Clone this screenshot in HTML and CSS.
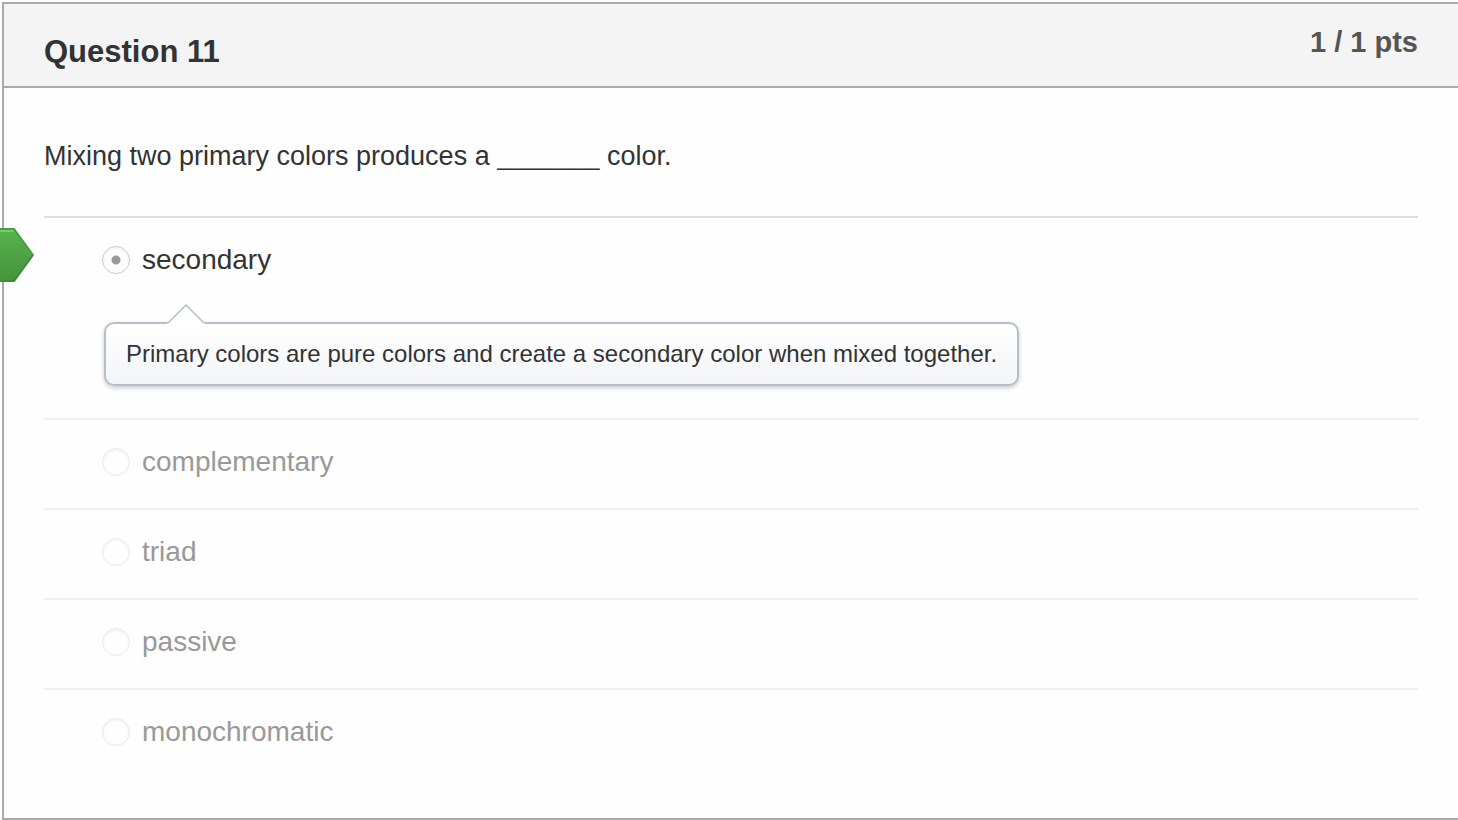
FILE: index.html
```html
<!DOCTYPE html>
<html lang="en">
<head>
<meta charset="utf-8">
<title>Question 11</title>
<link rel="stylesheet" href="styles.css">
</head>
<body>
<main class="question">
  <header class="question-header">
    <h1 class="question-name">Question 11</h1>
    <span class="question-points">1 / 1 pts</span>
  </header>
  <div class="question-body">
    <p class="question-text" id="question-text">Mixing two primary colors produces a <span class="blank">________</span> color.</p>
    <div class="answers" role="radiogroup" aria-labelledby="question-text">
      <div class="answer answer-selected">
        <svg class="correct-marker" viewBox="0 0 34 54" aria-hidden="true">
          <defs>
            <linearGradient id="marker-fill" x1="0" y1="0" x2="0" y2="1">
              <stop offset="0" stop-color="#56b44c"/>
              <stop offset="1" stop-color="#45933e"/>
            </linearGradient>
          </defs>
          <path d="M0 0H14.500L34 27L14.500 54H0Z" fill="url(#marker-fill)"/>
          <path d="M0 1H14L33 27" fill="none" stroke="#469b3e" stroke-width="1.500"/>
          <path d="M0 3H13.500" fill="none" stroke="#78c96f" stroke-width="2"/>
          <path d="M0 53H14L33 27" fill="none" stroke="#3f8938" stroke-width="1.500"/>
        </svg>
        <label class="answer-label"><input class="answer-radio" type="radio" name="answer" checked>secondary</label>
        <div class="comment">
          <svg class="comment-arrow" viewBox="0 0 38 20" aria-hidden="true">
            <path d="M0 20L19 1L38 20Z" fill="#fff"/>
            <path d="M1 19L19 1L37 19" fill="none" stroke="#b3bfcb" stroke-width="1.500"/>
          </svg>
          Primary colors are pure colors and create a secondary color when mixed together.
        </div>
      </div>
      <div class="answer"><label class="answer-label"><input class="answer-radio" type="radio" name="answer">complementary</label></div>
      <div class="answer"><label class="answer-label"><input class="answer-radio" type="radio" name="answer">triad</label></div>
      <div class="answer"><label class="answer-label"><input class="answer-radio" type="radio" name="answer">passive</label></div>
      <div class="answer"><label class="answer-label"><input class="answer-radio" type="radio" name="answer">monochromatic</label></div>
    </div>
  </div>
</main>
</body>
</html>
```

FILE: styles.css
```css
* {
  box-sizing: border-box;
}

body {
  margin: 0;
  background: #fff;
  color: #333;
  font-family: "Liberation Sans", Arial, sans-serif;
}

.question {
  margin: 2px 0 0 2px;
  border: 2px solid #aaa;
  border-right: 0;
  background: #fefefe;
}

.question-header {
  display: flex;
  justify-content: space-between;
  align-items: flex-start;
  padding: 20px 40px 14px;
  border-bottom: 2px solid #aaa;
  background: #f4f4f4;
}

.question-name {
  margin: 8px 0 0;
  font-size: 31px;
  line-height: 40px;
}

.question-points {
  color: #555;
  font-size: 29px;
  font-weight: bold;
  line-height: 36px;
}

.question-body {
  padding: 48px 40px 40px;
}

.question-text {
  margin: 0 0 40px;
  font-size: 27px;
  line-height: 40px;
}

.blank {
  font-size: 23px;
  line-height: 1;
}

.answer {
  position: relative;
  padding: 26px 0 30px 58px;
  border-top: 2px solid #eee;
}

.answer-selected {
  padding-bottom: 32px;
  border-top-color: #ddd;
}

.answer-label {
  display: flex;
  align-items: center;
  gap: 12px;
  color: #999;
  font-size: 28px;
  line-height: 32px;
}

.answer-selected .answer-label {
  color: #333;
}

.answer-radio {
  appearance: none;
  flex: none;
  width: 28px;
  height: 28px;
  margin: 0;
  border: 1px solid #eaeaea;
  border-radius: 50%;
  background: #fefefe;
  box-shadow: inset 0 1px 3px #eee;
}

.answer-radio:checked {
  border-color: #ccc;
  background: radial-gradient(circle, #999 4px, #fefefe 5px);
}

.correct-marker {
  position: absolute;
  top: 10px;
  left: -44px;
  width: 34px;
  height: 54px;
}

.comment {
  position: relative;
  width: fit-content;
  margin: 46px 0 0 2px;
  padding: 14px 20px;
  border: 2px solid #b3bfcb;
  border-radius: 10px;
  background: linear-gradient(#fff, #f2f4f7);
  box-shadow: 0 2px 4px #ccc;
  font-size: 24px;
  line-height: 32px;
}

.comment-arrow {
  position: absolute;
  top: -20px;
  left: 61px;
  width: 38px;
  height: 20px;
}
```
